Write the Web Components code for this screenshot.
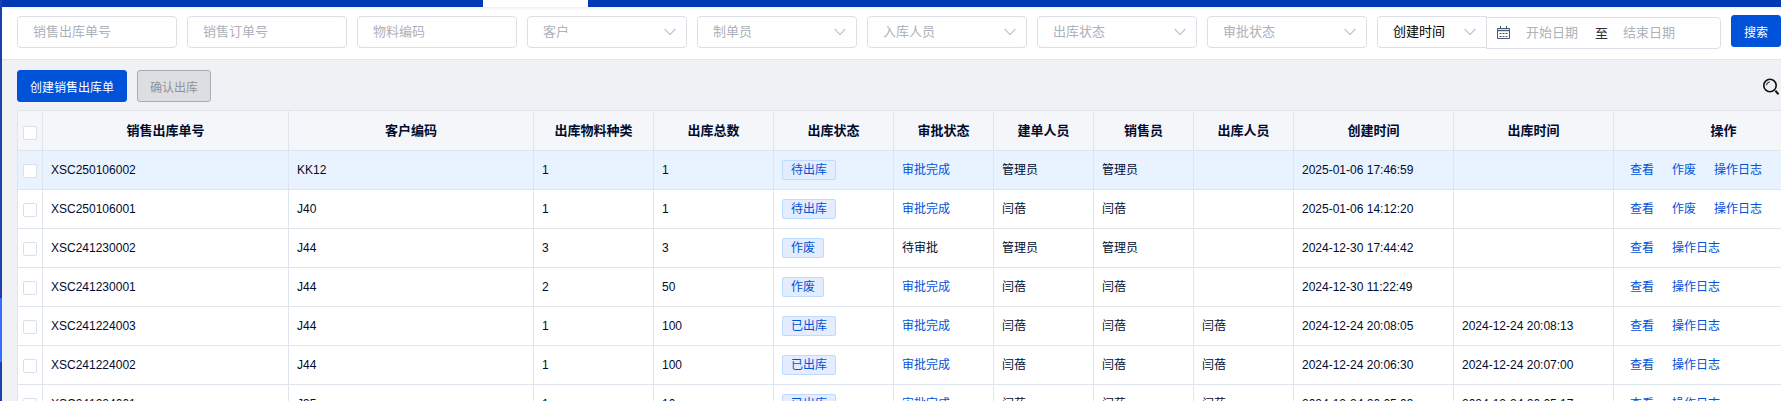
<!DOCTYPE html>
<html lang="zh-CN">
<head>
<meta charset="utf-8">
<title>销售出库单</title>
<style>
  html, body { margin: 0; height: 100%; overflow: hidden; }
  body { font-family: "Liberation Sans", "Noto Sans CJK SC", sans-serif; font-size: 12px; color: #000c2e; background: #f0f1f5; }
</style>
</head>
<body>
<outbound-page></outbound-page>
<script>
class BaseElement extends HTMLElement {
  render(html) {
    if (!this.shadowRoot) this.attachShadow({ mode: 'open' });
    this.shadowRoot.innerHTML = `<style>*{box-sizing:border-box}</style>${html}`;
  }
}

customElements.define('filter-input', class extends BaseElement {
  connectedCallback() {
    const label = this.getAttribute('label');
    this.render(`<style>
      :host { display: block; width: 160px; flex: none; }
      input { display: block; width: 100%; height: 32px; padding: 0 15px; border: 1px solid #dcdfe6; border-radius: 4px;
        background: #fff; font: 13px "Liberation Sans", "Noto Sans CJK SC", sans-serif; color: #000; outline: none; }
      input::placeholder { color: #adb1ba; opacity: 1; }
    </style><input type="text" aria-label="${label}" placeholder="${label}">`);
  }
});

customElements.define('filter-select', class extends BaseElement {
  connectedCallback() {
    const label = this.getAttribute('label');
    this.render(`<style>
      :host { display: grid; width: 160px; flex: none; align-items: center; }
      select, svg { grid-area: 1 / 1; }
      select { appearance: none; width: 100%; height: 32px; padding: 0 15px; border: 1px solid #dcdfe6;
        border-radius: var(--select-radius, 4px); background: #fff;
        font: 13px "Liberation Sans", "Noto Sans CJK SC", sans-serif; color: var(--select-color, #adb1ba); outline: none; }
      svg { justify-self: end; margin-right: 11px; pointer-events: none; }
    </style>
    <select aria-label="${label}"><option>${label}</option></select>
    <svg width="12" height="8" viewBox="0 0 12 8" fill="none" stroke="#c0c4cc" stroke-width="1.2"><path d="M.8 1 6 6.6 11.2 1"/></svg>`);
  }
});

customElements.define('date-range', class extends BaseElement {
  connectedCallback() {
    this.render(`<style>
      :host { display: flex; align-items: center; gap: 15px; width: 235px; height: 32px; flex: none; padding-left: 10px; background: #fff;
        border: 1px solid #dcdfe6; border-radius: 0 4px 4px 0; font-size: 13px; color: #303133; }
      svg { flex: none; }
      input { width: 54px; height: 30px; padding: 0; border: 0; background: none;
        font: 13px "Liberation Sans", "Noto Sans CJK SC", sans-serif; outline: none; }
      input::placeholder { color: #adb1ba; opacity: 1; }
    </style>
    <svg width="14" height="14" viewBox="0 0 14 14" fill="none" stroke="#4a5a78"><path d="M.5 2.5h12v10H.5zM3.5 0v3M9.5 0v3"/><path d="M.5 4.5h12" stroke-width="1.4"/><path stroke-dasharray="2 1" d="M2.5 7.5h8M2.5 10.5h8"/></svg>
    <input type="text" aria-label="开始日期" placeholder="开始日期"><span>至</span><input type="text" aria-label="结束日期" placeholder="结束日期">`);
  }
});

customElements.define('ui-button', class extends BaseElement {
  connectedCallback() {
    this.render(`<style>
      :host { display: block; flex: none; }
      button { display: block; height: 32px; padding: 0 12px; border: 1px solid #0052d9; border-radius: 3px; background: #0052d9; color: #fff;
        font: 12px "Liberation Sans", "Noto Sans CJK SC", sans-serif; white-space: nowrap; }
      button:disabled { background: #dddee2; border-color: #a8abb2; color: #8f9299; }
    </style><button type="button" ${this.hasAttribute('disabled') ? 'disabled' : ''}><slot></slot></button>`);
  }
});

customElements.define('status-tag', class extends BaseElement {
  connectedCallback() {
    this.render(`<style>
      :host { display: block; width: fit-content; height: 20px; padding: 0 8px; border: 1px solid #bfdaff; border-radius: 2px;
        background: #e3edff; color: #0052d9; line-height: 18px; }
    </style><slot></slot>`);
  }
});

customElements.define('top-strip', class extends BaseElement {
  connectedCallback() {
    this.render(`<style>
      :host { display: flex; flex: none; height: 7px; padding-left: 481px; background: #0039b3; }
      i { width: 105px; background: #fff; }
    </style><i></i>`);
  }
});

customElements.define('side-rail', class extends BaseElement {
  connectedCallback() {
    this.render(`<style>
      :host { display: block; width: 2px; flex: none; padding-top: 298px; background: #1d3fae; }
      i { display: block; height: 64px; background: #3370ff; }
    </style><i></i>`);
  }
});

customElements.define('filter-bar', class extends BaseElement {
  connectedCallback() {
    this.render(`<style>
      :host { display: flex; flex: none; align-items: center; gap: 10px; height: 53px; padding: 0 0 3px 15px; background: #fff;
        border-bottom: 1px solid #e3e5e9; box-shadow: inset 0 3px 3px -2px #00000014; }
      .range { display: flex; flex: none; align-items: flex-start; height: 32px; }
      .range filter-select { width: 110px; margin-right: -1px; --select-color: #000; --select-radius: 4px 0 0 4px; }
      .range date-range { margin-top: 1px; }
      .search { align-self: flex-start; margin-top: 8px; }
    </style>
    ${['销售出库单号', '销售订单号', '物料编码'].map(l => `<filter-input label="${l}"></filter-input>`).join('')}
    ${['客户', '制单员', '入库人员', '出库状态', '审批状态'].map(l => `<filter-select label="${l}"></filter-select>`).join('')}
    <div class="range"><filter-select label="创建时间"></filter-select><date-range></date-range></div>
    <ui-button class="search">搜索</ui-button>`);
  }
});

customElements.define('action-bar', class extends BaseElement {
  connectedCallback() {
    this.render(`<style>
      :host { display: flex; flex: none; align-items: center; gap: 10px; padding: 10px 2px 8px 15px; }
      .find { margin-left: auto; padding: 0; border: 0; background: none; line-height: 0; }
    </style>
    <ui-button>创建销售出库单</ui-button><ui-button disabled>确认出库</ui-button>
    <button class="find" type="button" aria-label="查找"><svg width="17" height="17" viewBox="0 0 17 17" fill="none" stroke="#111"><circle cx="8" cy="7.5" r="6.2" stroke-width="1.6"/><path d="M4.5 7.3A3.6 3.6 0 0 1 7.8 3.9" stroke-width="1"/><path d="m13.4 12.8 3.2 3.4" stroke-width="2"/></svg></button>`);
  }
});

const COLUMNS = [
  ['销售出库单号', 246], ['客户编码', 245], ['出库物料种类', 120], ['出库总数', 120], ['出库状态', 120], ['审批状态', 100],
  ['建单人员', 100], ['销售员', 100], ['出库人员', 100], ['创建时间', 160], ['出库时间', 160], ['操作', 220]
];
const ROWS = [
  ['XSC250106002', 'KK12', '1', '1', '待出库', '审批完成', '管理员', '管理员', '', '2025-01-06 17:46:59', '', ['查看', '作废', '操作日志']],
  ['XSC250106001', 'J40', '1', '1', '待出库', '审批完成', '闫蓓', '闫蓓', '', '2025-01-06 14:12:20', '', ['查看', '作废', '操作日志']],
  ['XSC241230002', 'J44', '3', '3', '作废', '待审批', '管理员', '管理员', '', '2024-12-30 17:44:42', '', ['查看', '操作日志']],
  ['XSC241230001', 'J44', '2', '50', '作废', '审批完成', '闫蓓', '闫蓓', '', '2024-12-30 11:22:49', '', ['查看', '操作日志']],
  ['XSC241224003', 'J44', '1', '100', '已出库', '审批完成', '闫蓓', '闫蓓', '闫蓓', '2024-12-24 20:08:05', '2024-12-24 20:08:13', ['查看', '操作日志']],
  ['XSC241224002', 'J44', '1', '100', '已出库', '审批完成', '闫蓓', '闫蓓', '闫蓓', '2024-12-24 20:06:30', '2024-12-24 20:07:00', ['查看', '操作日志']],
  ['XSC241224001', 'J35', '1', '10', '已出库', '审批完成', '闫蓓', '闫蓓', '闫蓓', '2024-12-24 20:05:03', '2024-12-24 20:05:17', ['查看', '操作日志']]
];

customElements.define('order-table', class extends BaseElement {
  cell(value, i) {
    if (i === 4) return `<status-tag>${value}</status-tag>`;
    if (i === 5 && value === '审批完成') return `<a href="#">${value}</a>`;
    if (i === 11) return `<nav>${value.map(v => `<a href="#">${v}</a>`).join('')}</nav>`;
    return value;
  }
  connectedCallback() {
    this.render(`<style>
      :host { display: block; flex: 1; min-height: 0; margin-left: 15px; overflow: auto; scrollbar-width: none;
        border: solid #dfe5ec; border-width: 1px 0 0 1px; border-radius: 4px 0 0 0; }
      table { table-layout: fixed; width: 100%; min-width: 1816px; border-collapse: separate; border-spacing: 0; font-size: 12px; line-height: 18px; }
      th, td { height: 39px; padding: 0 8px; border: solid #dfe5ec; border-width: 0 1px 1px 0; text-align: left; white-space: nowrap; background: #fff; }
      th { height: 40px; font-size: 13px; text-align: center; background: #f4f6fa; }
      tr.current td { background: #e9f2ff; }
      .pick { padding: 2px 5px 0; line-height: 0; }
      th.pick { padding-top: 4px; }
      input { appearance: none; display: block; width: 14px; height: 14px; margin: 0; border: 1px solid #dcdfe6; border-radius: 2px; background: #fff; }
      a { color: #0052d9; text-decoration: none; }
      nav { display: flex; gap: 18px; padding-left: 8px; }
    </style>
    <table>
      <colgroup><col style="width:25px">${COLUMNS.map(c => `<col style="width:${c[1]}px">`).join('')}</colgroup>
      <thead><tr><th class="pick"><input type="checkbox" aria-label="全选"></th>${COLUMNS.map(c => `<th>${c[0]}</th>`).join('')}</tr></thead>
      <tbody>${ROWS.map((r, n) => `<tr class="${n ? '' : 'current'}"><td class="pick"><input type="checkbox" aria-label="选择 ${r[0]}"></td>${r.map((v, i) => `<td>${this.cell(v, i)}</td>`).join('')}</tr>`).join('')}</tbody>
    </table>`);
  }
});

customElements.define('outbound-page', class extends BaseElement {
  connectedCallback() {
    this.render(`<style>
      :host { display: flex; height: 100vh; overflow: hidden; }
      main { display: flex; flex-direction: column; flex: 1; min-width: 0; }
    </style>
    <side-rail></side-rail>
    <main><top-strip></top-strip><filter-bar></filter-bar><action-bar></action-bar><order-table></order-table></main>`);
  }
});
</script>
</body>
</html>
